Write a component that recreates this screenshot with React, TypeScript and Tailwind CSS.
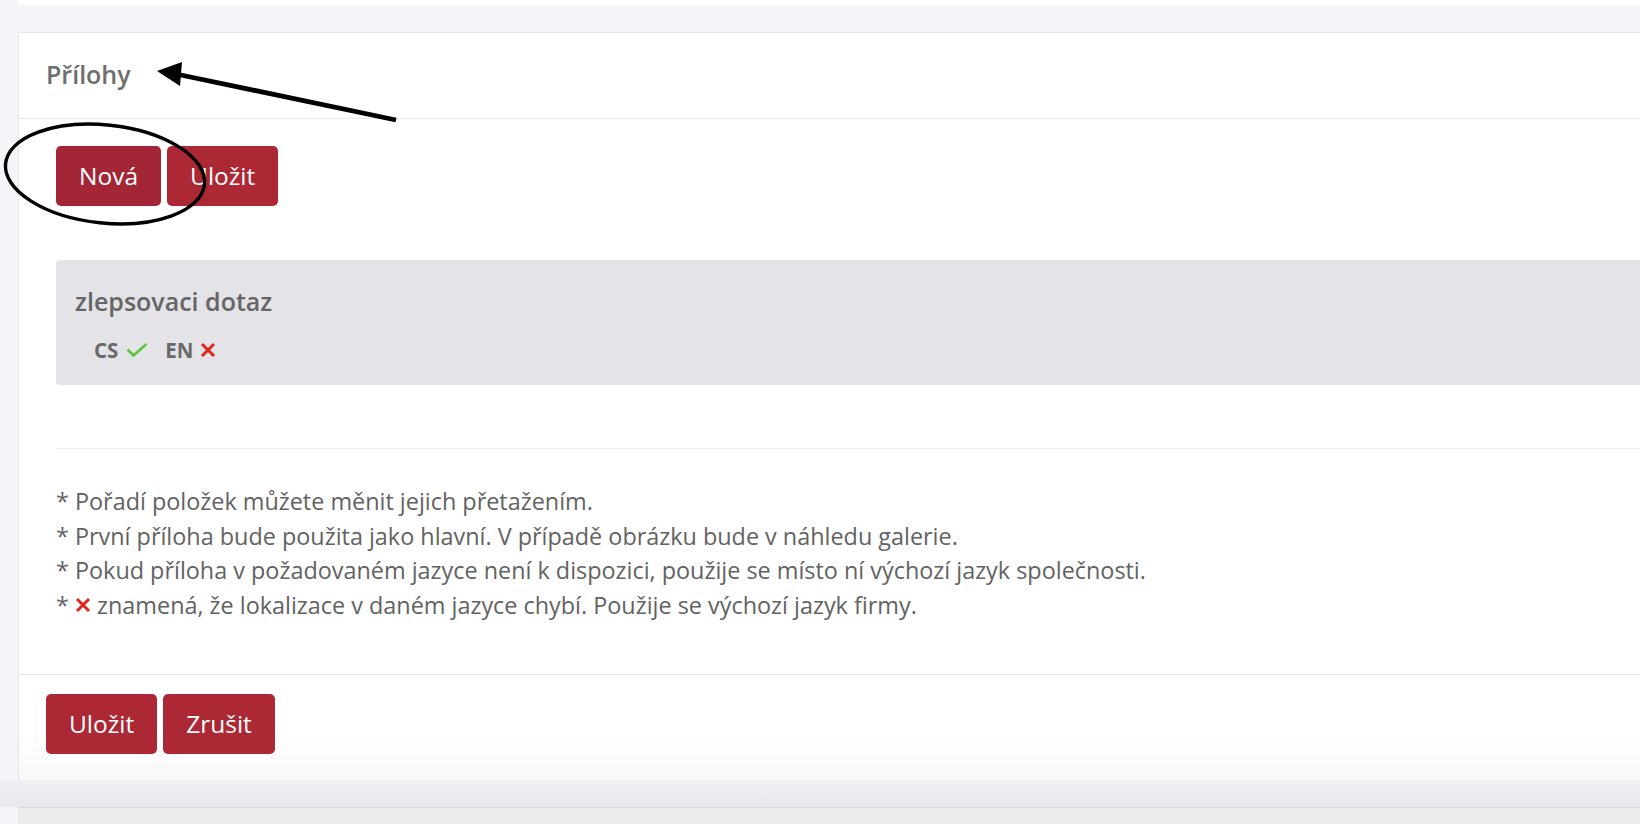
import React from "react";

const font = { fontFamily: '"Open Sans", "Noto Sans", sans-serif' };

function Btn({ children, dark }: { children: React.ReactNode; dark?: boolean }) {
  return (
    <button
      className={
        "h-[60px] px-[23px] rounded-[5px] text-white text-[24.5px] leading-none " +
        (dark ? "bg-[#a32636]" : "bg-[#ab2834]")
      }
    >
      {children}
    </button>
  );
}

function Check() {
  return (
    <svg width="22" height="14" viewBox="0 0 22 14" className="inline-block">
      <path d="M1.5 6.5 L7.5 12.5 L20.5 1" fill="none" stroke="#5cc440" strokeWidth="2.6" />
    </svg>
  );
}

function Cross({ size = 16 }: { size?: number }) {
  return (
    <svg width={size} height={size} viewBox="0 0 16 16" className="inline-block">
      <path d="M2 2 L14 14 M14 2 L2 14" fill="none" stroke="#e3261c" strokeWidth="3" />
    </svg>
  );
}

export default function App() {
  return (
    <div className="relative w-[1640px] h-[824px] overflow-hidden bg-[#f4f5f9]" style={font}>
      {/* end of previous card */}
      <div className="ml-[18px] h-[5px] bg-white" />
      <div className="h-[27px]" />
      {/* card */}
      <div className="ml-[18px] mr-[-20px] bg-white border-t border-l border-[#e6e6ea] flex flex-col">
        <div className="h-[86px] border-b border-[#e8e8ec] pl-[27px] flex items-center">
          <h2 className="text-[25px] font-semibold text-[#6e6e6e] pb-[2px]">Přílohy</h2>
        </div>
        <div className="pl-[37px] pt-[27px]">
          <div className="flex gap-[6px]">
            <Btn dark>Nová</Btn>
            <Btn>Uložit</Btn>
          </div>
          <div className="mt-[54px] h-[125px] bg-[#e4e3e8] rounded-l-[4px] pl-[19px] pt-[24px]">
            <div className="text-[25px] font-semibold text-[#666666] leading-[34px]">zlepsovaci dotaz</div>
            <div className="mt-[19px] pl-[19px] flex items-center text-[20.5px] font-bold text-[#6a6a6a] leading-[26px]">
              <span>CS</span>
              <span className="ml-[8px] flex items-center"><Check /></span>
              <span className="ml-[17px]">EN</span>
              <span className="ml-[6px] flex items-center"><Cross size={16} /></span>
            </div>
          </div>
          <div className="mt-[63px] border-t border-[#ececef]" />
          <div className="pt-[35px] pb-[52px] text-[23.4px] leading-[34.5px] text-[#626262]">
            <div>* Pořadí položek můžete měnit jejich přetažením.</div>
            <div>* První příloha bude použita jako hlavní. V případě obrázku bude v náhledu galerie.</div>
            <div>* Pokud příloha v požadovaném jazyce není k dispozici, použije se místo ní výchozí jazyk společnosti.</div>
            <div className="flex items-center">
              <span>*&nbsp;</span>
              <Cross size={16} />
              <span>&nbsp;znamená, že lokalizace v daném jazyce chybí. Použije se výchozí jazyk firmy.</span>
            </div>
          </div>
        </div>
        <div className="border-t border-[#e6e6ea] pl-[27px] pt-[19px] h-[106px] bg-gradient-to-b from-white from-[55%] to-[#f8f8f8]">
          <div className="flex gap-[6px]">
            <Btn>Uložit</Btn>
            <Btn>Zrušit</Btn>
          </div>
        </div>
      </div>
      <div className="h-[27px] bg-gradient-to-b from-[#eff0f4] to-[#e8e9ed]" />
      <div className="ml-[18px] h-[40px] border-t border-[#d9d9dc] bg-[#ebebeb]" />

      {/* annotations */}
      <svg className="absolute left-0 top-0 pointer-events-none" width="1640" height="824">
        <ellipse cx="105" cy="174" rx="100" ry="49" transform="rotate(6 105 174)" fill="none" stroke="#000" strokeWidth="3.4" />
        <line x1="396" y1="120" x2="176" y2="74" stroke="#000" strokeWidth="4.8" />
        <polygon points="157,71 182,62 180,86" fill="#000" />
      </svg>
    </div>
  );
}
